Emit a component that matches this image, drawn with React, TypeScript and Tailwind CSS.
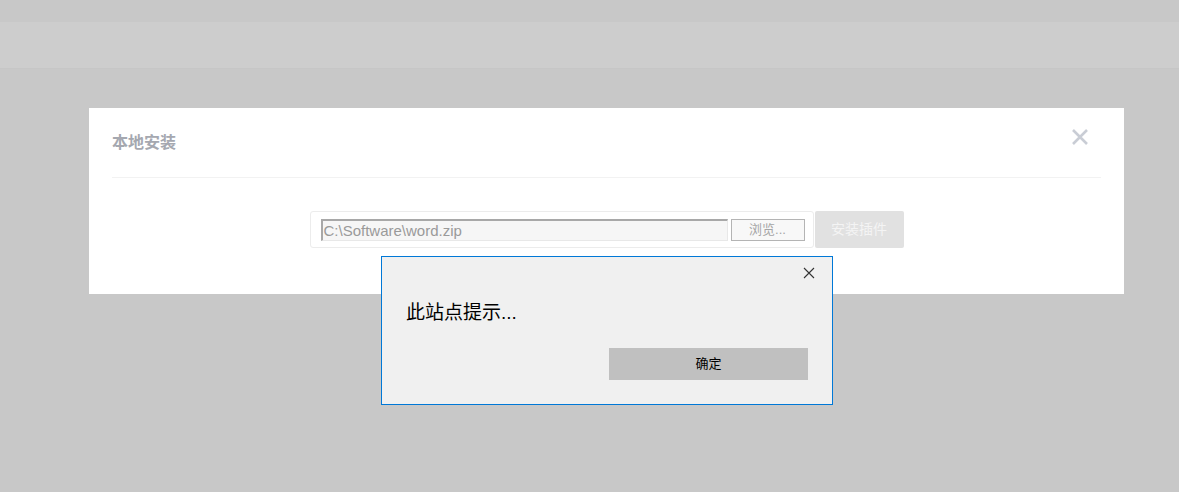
const App = () => {
  return (
    <div
      className="relative w-full h-[492px] overflow-hidden bg-[#c8c8c8]"
      style={{ fontFamily: '"Liberation Sans", "Noto Sans CJK SC", sans-serif' }}
    >
      <div className="h-[22px]"></div>
      <div className="h-[47px] bg-[#cdcdcd] border-b border-[#c6c6c6]"></div>

      {/* local install modal */}
      <div className="ml-[89px] mt-[39px] w-[1035px] h-[186px] bg-white px-[23px]">
        <div className="h-[70px] flex items-center justify-between border-b border-[#f2f2f2] w-[989px]">
          <span className="text-[16px] font-bold text-[#a5a8b0] pt-[1px]">本地安装</span>
          <svg width="18" height="18" viewBox="0 0 18 18" className="mr-[12px] mb-[12px]">
            <path d="M2 2 L16 16 M16 2 L2 16" stroke="#c9cdd5" strokeWidth="2.6" />
          </svg>
        </div>
        <div className="mt-[33px] flex justify-center">
          <div className="flex">
            <div className="w-[504px] h-[37px] border border-[#ececec] rounded-[3px] flex items-center pl-[10px] gap-[3px]">
              <div className="w-[407px] h-[22px] bg-[#f6f6f6] border-t-2 border-l-2 border-[#a8a8a8] border-r border-b border-r-[#e8e8e8] border-b-[#e8e8e8] flex items-center pl-[1px] text-[15px] text-[#9a9a9a] leading-none">
                C:\Software\word.zip
              </div>
              <div className="w-[74px] h-[22px] bg-[#f8f8f8] border border-[#b4b4b4] flex items-center justify-center text-[13px] text-[#a6a6a6] leading-none">
                浏览...
              </div>
            </div>
            <div className="ml-[1px] w-[89px] h-[37px] rounded-[2px] bg-[#e1e1e1] flex items-center justify-center text-[14px] text-[#f4f4f4]">
              安装插件
            </div>
          </div>
        </div>
      </div>

      {/* browser alert */}
      <div className="absolute left-[381px] top-[256px] w-[452px] h-[149px] bg-[#f0f0f0] border border-[#0078d7]">
        <div className="flex justify-end pt-[10px] pr-[17px]">
          <svg width="12" height="12" viewBox="0 0 12 12">
            <path d="M1 1 L11 11 M11 1 L1 11" stroke="#333" strokeWidth="1.1" />
          </svg>
        </div>
        <div className="pl-[24px] mt-[24px] text-[19px] text-black leading-none">此站点提示...</div>
        <div className="flex justify-end pr-[24px] mt-[26px]">
          <div className="w-[199px] h-[32px] bg-[#c0c0c0] flex items-center justify-center text-[13px] text-black">
            确定
          </div>
        </div>
      </div>
    </div>
  );
};

export default App;
